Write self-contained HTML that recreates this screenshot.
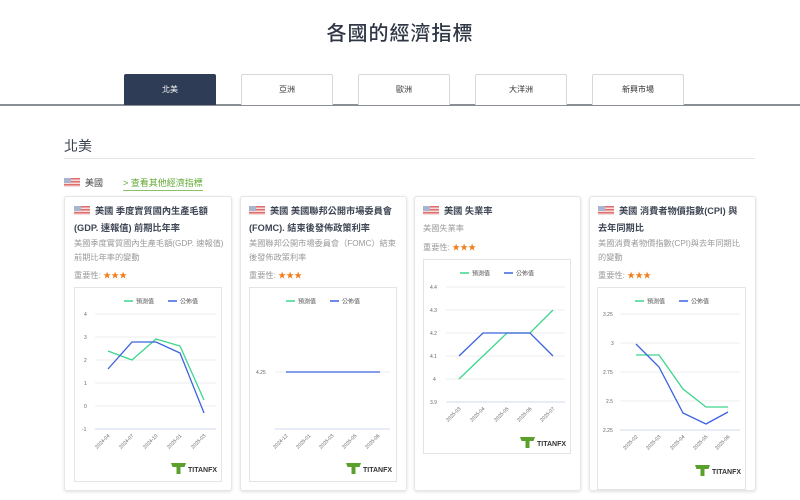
<!DOCTYPE html>
<html><head><meta charset="utf-8"><style>
*{margin:0;padding:0;box-sizing:border-box}
body{width:800px;height:500px;overflow:hidden;background:#fff;font-family:"Liberation Sans","Noto Sans CJK TC",sans-serif;color:#3a4150;position:relative}
.a{position:absolute}
h1{position:absolute;left:0;width:800px;top:17px;text-align:center;font-size:20px;font-weight:500;color:#2f3746;letter-spacing:1px}
.tab{position:absolute;top:74px;width:92px;height:31px;border:1px solid #d8d8d8;border-bottom:none;border-radius:2px 2px 0 0;font-size:8px;text-align:center;line-height:29px;color:#333;background:#fff}
.tab.on{background:#2e3c55;color:#fff;border-color:#2e3c55}
.card{position:absolute;top:196px;height:295px;border:1px solid #e6e6e6;border-radius:3px;box-shadow:0 1px 3px rgba(0,0,0,.12);background:#fff}
.t{position:absolute;font-size:9.2px;font-weight:bold;color:#3e4654;line-height:17px}
.d{position:absolute;font-size:8.2px;color:#9a9a9a;line-height:13.5px}
.s{position:absolute;font-size:8.2px;color:#9a9a9a}
.s b{color:#f07d1a;font-weight:normal;font-size:8px}
.flag{display:inline-block;width:16px;height:9px;background:repeating-linear-gradient(#e06c6c 0 1.5px,#f4dcdc 1.5px 3px);position:relative;vertical-align:-1px;margin-right:5px}
.flag:before{content:"";position:absolute;left:0;top:0;width:7px;height:5px;background:#a9b4cf}
.box{position:absolute;border:1px solid #e4e4e4}
</style></head><body>
<h1>各國的經濟指標</h1>
<div class="a" style="left:0;top:104px;width:800px;height:1.5px;background:#8a8f96"></div>
<div class="tab on" style="left:124px">北美</div>
<div class="tab" style="left:241px">亞洲</div>
<div class="tab" style="left:358px">歐洲</div>
<div class="tab" style="left:475px">大洋洲</div>
<div class="tab" style="left:592px">新興市場</div>
<div class="a" style="left:64px;top:136px;font-size:14px;color:#3a4150">北美</div>
<div class="a" style="left:64px;top:158px;width:691px;height:1px;background:#e5e5e5"></div>
<div class="a" style="left:64px;top:176px;font-size:9px;color:#444"><span class="flag"></span>美國</div>
<div class="a" style="left:123px;top:176px;font-size:9px;color:#5fa832;border-bottom:1px solid #8cc265;padding-bottom:1px">&gt; 查看其他經濟指標</div>

<div class="card" style="left:64px;width:168px"></div>
<div class="card" style="left:240px;width:167px"></div>
<div class="card" style="left:414px;width:167px"></div>
<div class="card" style="left:589px;width:167px"></div>

<div class="t" style="left:74px;top:203px;width:146px"><span class="flag"></span>美國 季度實質國內生產毛額(GDP. 速報值) 前期比年率</div>
<div class="d" style="left:74px;top:237px;width:152px">美國季度實質國內生產毛額(GDP. 速報值)前期比年率的變動</div>
<div class="s" style="left:74px;top:269px">重要性: <b>★★★</b></div>

<div class="t" style="left:249px;top:203px;width:150px"><span class="flag"></span>美國 美國聯邦公開市場委員會(FOMC). 結束後發佈政策利率</div>
<div class="d" style="left:249px;top:237px;width:150px">美國聯邦公開市場委員會（FOMC）結束後發佈政策利率</div>
<div class="s" style="left:249px;top:269px">重要性: <b>★★★</b></div>

<div class="t" style="left:423px;top:203px;width:150px"><span class="flag"></span>美國 失業率</div>
<div class="d" style="left:423px;top:222px;width:150px">美國失業率</div>
<div class="s" style="left:423px;top:241px">重要性: <b>★★★</b></div>

<div class="t" style="left:598px;top:203px;width:142px"><span class="flag"></span>美國 消費者物價指數(CPI) 與去年同期比</div>
<div class="d" style="left:598px;top:237px;width:148px">美國消費者物價指數(CPI)與去年同期比的變動</div>
<div class="s" style="left:598px;top:269px">重要性: <b>★★★</b></div>

<div class="box" style="left:74px;top:287px;width:148px;height:195px"></div>
<div class="box" style="left:249px;top:287px;width:148px;height:195px"></div>
<div class="box" style="left:423px;top:259px;width:148px;height:195px"></div>
<div class="box" style="left:597px;top:287px;width:149px;height:203px"></div>

<svg class="a" style="left:0;top:0" width="800" height="500" font-family="Liberation Sans,Noto Sans CJK TC,sans-serif">
<defs>
<g id="leg"><line x1="0" y1="0" x2="9" y2="0" stroke="#3dd68c" stroke-width="1.5"/><text x="12" y="2.5" font-size="6" fill="#555">預測值</text><line x1="44" y1="0" x2="53" y2="0" stroke="#3b63e0" stroke-width="1.5"/><text x="56" y="2.5" font-size="6" fill="#555">公佈值</text></g>
<g id="logo"><path d="M-2 -1h15l-1.5 4h-4v7h-4v-7h-4z" fill="#5aa02c"/><text x="15" y="8" font-size="7" font-weight="bold" fill="#333">TITANFX</text></g>
</defs>
<g font-size="5" fill="#666">
<use href="#leg" x="124" y="301"/>
<g stroke="#eee" stroke-width="1"><line x1="95" y1="314" x2="216" y2="314"/><line x1="95" y1="337" x2="216" y2="337"/><line x1="95" y1="360" x2="216" y2="360"/><line x1="95" y1="383" x2="216" y2="383"/><line x1="95" y1="406" x2="216" y2="406"/></g>
<line x1="95" y1="429" x2="216" y2="429" stroke="#cfd8ee"/>
<text x="84" y="316">4</text><text x="84" y="339">3</text><text x="84" y="362">2</text><text x="84" y="385">1</text><text x="84" y="408">0</text><text x="82" y="431">-1</text>
<polyline points="108,351 132,360 156,339 180,346 204,400" fill="none" stroke="#3dd68c" stroke-width="1.3"/>
<polyline points="108,369 132,342 156,342 180,353 204,413" fill="none" stroke="#3b63e0" stroke-width="1.3"/>
<g text-anchor="end"><text transform="translate(110,436) rotate(-45)">2024-04</text><text transform="translate(134,436) rotate(-45)">2024-07</text><text transform="translate(158,436) rotate(-45)">2024-10</text><text transform="translate(182,436) rotate(-45)">2025-01</text><text transform="translate(206,436) rotate(-45)">2025-03</text></g>
<use href="#logo" x="173" y="464"/>
<use href="#leg" x="286" y="301"/>
<line x1="275" y1="372" x2="390" y2="372" stroke="#eee"/>
<line x1="275" y1="429" x2="390" y2="429" stroke="#cfd8ee"/>
<text x="256" y="374">4.25</text>
<line x1="286" y1="372" x2="380" y2="372" stroke="#3b63e0" stroke-width="1.3"/>
<g text-anchor="end"><text transform="translate(288,436) rotate(-45)">2024-12</text><text transform="translate(311,436) rotate(-45)">2025-01</text><text transform="translate(334,436) rotate(-45)">2025-03</text><text transform="translate(357,436) rotate(-45)">2025-05</text><text transform="translate(380,436) rotate(-45)">2025-06</text></g>
<use href="#logo" x="348" y="464"/>
<use href="#leg" x="460" y="273"/>
<g stroke="#eee"><line x1="446" y1="287" x2="565" y2="287"/><line x1="446" y1="310" x2="565" y2="310"/><line x1="446" y1="333" x2="565" y2="333"/><line x1="446" y1="356" x2="565" y2="356"/><line x1="446" y1="379" x2="565" y2="379"/></g>
<line x1="446" y1="402" x2="565" y2="402" stroke="#cfd8ee"/>
<text x="430" y="289">4.4</text><text x="430" y="312">4.3</text><text x="430" y="335">4.2</text><text x="430" y="358">4.1</text><text x="433" y="381">4</text><text x="430" y="404">3.9</text>
<polyline points="459,379 483,356 507,333 530,333 553,310" fill="none" stroke="#3dd68c" stroke-width="1.3"/>
<polyline points="459,356 483,333 507,333 530,333 553,356" fill="none" stroke="#3b63e0" stroke-width="1.3"/>
<g text-anchor="end"><text transform="translate(461,409) rotate(-45)">2025-03</text><text transform="translate(485,409) rotate(-45)">2025-04</text><text transform="translate(509,409) rotate(-45)">2025-05</text><text transform="translate(532,409) rotate(-45)">2025-06</text><text transform="translate(555,409) rotate(-45)">2025-07</text></g>
<use href="#logo" x="522" y="438"/>
<use href="#leg" x="635" y="301"/>
<g stroke="#eee"><line x1="620" y1="314" x2="740" y2="314"/><line x1="620" y1="343" x2="740" y2="343"/><line x1="620" y1="372" x2="740" y2="372"/><line x1="620" y1="401" x2="740" y2="401"/></g>
<line x1="620" y1="430" x2="740" y2="430" stroke="#cfd8ee"/>
<text x="603" y="316">3.25</text><text x="611" y="345">3</text><text x="603" y="374">2.75</text><text x="606" y="403">2.5</text><text x="603" y="432">2.25</text>
<polyline points="636,355 659,355 683,389 706,407 728,407" fill="none" stroke="#3dd68c" stroke-width="1.3"/>
<polyline points="636,344 659,367 683,413 706,424 728,412" fill="none" stroke="#3b63e0" stroke-width="1.3"/>
<g text-anchor="end"><text transform="translate(638,437) rotate(-45)">2025-02</text><text transform="translate(661,437) rotate(-45)">2025-03</text><text transform="translate(685,437) rotate(-45)">2025-04</text><text transform="translate(708,437) rotate(-45)">2025-05</text><text transform="translate(730,437) rotate(-45)">2025-06</text></g>
<use href="#logo" x="697" y="466"/>
</g>
</svg>
</body></html>
